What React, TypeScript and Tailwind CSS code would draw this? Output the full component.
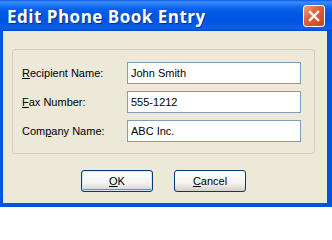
import React from "react";

const labelFont = { fontFamily: '"Liberation Sans", Arial, sans-serif' };

function Row({ label, value }: { label: React.ReactNode; value: string }) {
  return (
    <div className="flex items-center h-[22px]">
      <div className="w-[105px] text-[11px] text-black leading-none">{label}</div>
      <div className="w-[174px] h-[22px] bg-white border border-[#7F9DB9] flex items-center pl-[3px] text-[11px] text-black leading-none">
        {value}
      </div>
    </div>
  );
}

export default function App() {
  return (
    <div
      className="w-[332px] h-[207px] flex flex-col bg-[#0054E3] overflow-hidden"
      style={labelFont}
    >
      <div className="h-[31px] shrink-0 flex items-start bg-[linear-gradient(to_bottom,#0A5AE6_0px,#3D8DF8_2px,#2A7EF6_4px,#0B63EE_8px,#0057E5_14px,#0054E3_20px,#0A5CEA_27px,#0B5FEC_29px,#0043C8_31px)]">
        <div
          className="pl-[7px] pt-[7px] text-white font-bold text-[17px] leading-[20px] tracking-[0.5px] [text-shadow:1px_1px_0_#0A2E8C]"
          style={{ fontFamily: '"Open Sans", sans-serif' }}
        >
          Edit Phone Book Entry
        </div>
        <div className="ml-auto mr-[7px] mt-[5px] w-[22px] h-[22px] rounded-[3px] border border-white bg-[linear-gradient(135deg,#EEA184_0%,#E2603A_40%,#CC4520_100%)] flex items-center justify-center">
          <svg width="14" height="14" viewBox="0 0 14 14">
            <path d="M3 3 L11 11 M11 3 L3 11" stroke="white" strokeWidth="2.4" strokeLinecap="square" />
          </svg>
        </div>
      </div>
      <div className="h-[172px] shrink-0 flex flex-col ml-[3px] mr-[5px] bg-[#ECE9D8]">
        <div className="ml-[9px] mt-[18px] w-[303px] rounded-[3px] border border-[#D0D0BF] pl-[9px] pt-[12px] pb-[11px] flex flex-col gap-[7px]">
          <Row
            label={<span><span className="underline">R</span>ecipient Name:</span>}
            value="John Smith"
          />
          <Row
            label={<span><span className="underline">F</span>ax Number:</span>}
            value="555-1212"
          />
          <Row
            label={<span>Com<span className="underline">p</span>any Name:</span>}
            value="ABC Inc."
          />
        </div>
        <div className="mt-[16px] flex justify-center gap-[21px] pr-[3px]">
          <div className="w-[72px] h-[22px] rounded-[3px] border border-[#003C74] bg-[linear-gradient(to_bottom,#FFFFFF_0%,#F3F3EF_60%,#D6D0C5_100%)] flex items-center justify-center text-[11px] text-black leading-none shadow-[inset_0_0_0_1px_#CEE7FF,inset_0_-1px_0_1px_#6982EE]">
            <span><span className="underline">O</span>K</span>
          </div>
          <div className="w-[72px] h-[22px] rounded-[3px] border border-[#003C74] bg-[linear-gradient(to_bottom,#FFFFFF_0%,#F3F3EF_60%,#D6D0C5_100%)] flex items-center justify-center text-[11px] text-black leading-none">
            <span><span className="underline">C</span>ancel</span>
          </div>
        </div>
      </div>
    </div>
  );
}
